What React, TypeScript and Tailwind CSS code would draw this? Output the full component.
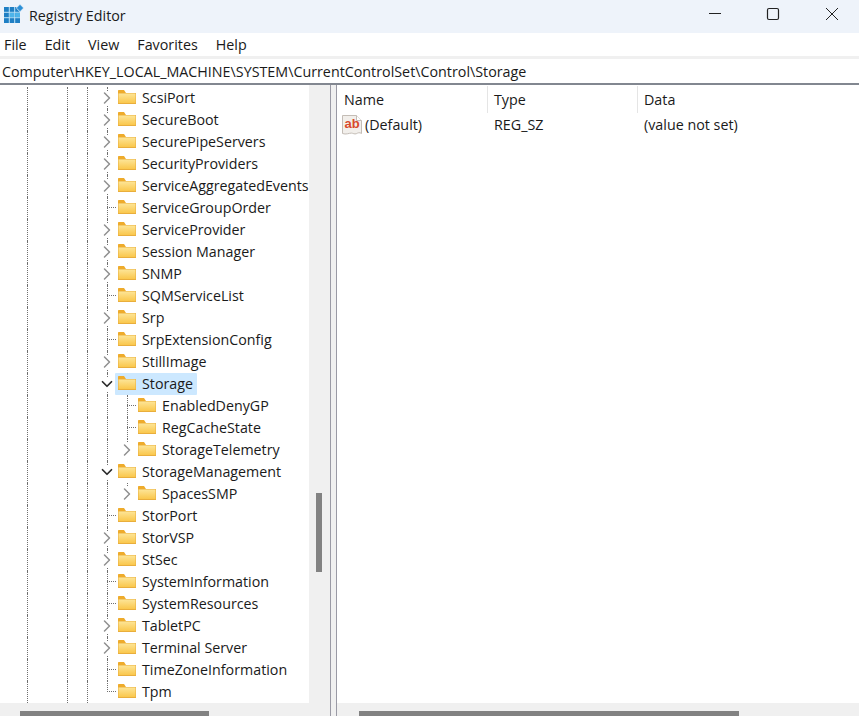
import { ChevronDown, ChevronRight } from "lucide-react";

type Row = { name: string; level?: 0 | 1; arrow?: "open" | "closed"; selected?: boolean; last?: boolean };

const rows: Row[] = [
  { name: "ScsiPort", arrow: "closed" },
  { name: "SecureBoot", arrow: "closed" },
  { name: "SecurePipeServers", arrow: "closed" },
  { name: "SecurityProviders", arrow: "closed" },
  { name: "ServiceAggregatedEvents", arrow: "closed" },
  { name: "ServiceGroupOrder" },
  { name: "ServiceProvider", arrow: "closed" },
  { name: "Session Manager", arrow: "closed" },
  { name: "SNMP", arrow: "closed" },
  { name: "SQMServiceList" },
  { name: "Srp", arrow: "closed" },
  { name: "SrpExtensionConfig" },
  { name: "StillImage", arrow: "closed" },
  { name: "Storage", arrow: "open", selected: true },
  { name: "EnabledDenyGP", level: 1 },
  { name: "RegCacheState", level: 1 },
  { name: "StorageTelemetry", level: 1, arrow: "closed", last: true },
  { name: "StorageManagement", arrow: "open" },
  { name: "SpacesSMP", level: 1, arrow: "closed", last: true },
  { name: "StorPort" },
  { name: "StorVSP", arrow: "closed" },
  { name: "StSec", arrow: "closed" },
  { name: "SystemInformation" },
  { name: "SystemResources" },
  { name: "TabletPC", arrow: "closed" },
  { name: "Terminal Server", arrow: "closed" },
  { name: "TimeZoneInformation" },
  { name: "Tpm", last: true },
];

const Folder = () => (
  <svg width="18" height="14" viewBox="0 0 18 14" className="shrink-0 mt-[3px]">
    <defs>
      <linearGradient id="folderBody" x1="0" y1="0" x2="0" y2="1">
        <stop offset="0" stopColor="#fde597" />
        <stop offset="1" stopColor="#fac74c" />
      </linearGradient>
    </defs>
    <path d="M0 1c0-.6.4-1 1-1h5l2 3H0z" fill="#eeab2b" />
    <path d="M0 3h18v11H0z" fill="#e9ae3c" />
    <rect x="0.500" y="3.500" width="17" height="9.500" fill="url(#folderBody)" />
  </svg>
);

const RegIcon = () => (
  <svg width="20" height="20" viewBox="0 0 20 20" className="shrink-0">
    <path d="M0.500 0.500h14l5 5v13c-2-1.400-3.600-.6-5.200.2-1.700.8-3.300-.6-5-.6-2.400 0-5.300 1.800-8.800.4z" fill="#f2efeb" stroke="#c4bdb6" strokeWidth="1" />
    <path d="M14.500 0.500v5h5" fill="#fff" stroke="#c4bdb6" strokeWidth="1" />
    <text x="2.500" y="13" fontSize="13" fontWeight="700" fill="#d94a2b" fontFamily="Liberation Sans, sans-serif">ab</text>
  </svg>
);

// dotted tree guide, one cell per indent
const Guide = ({ width }: { width: string }) => (
  <div className={`${width} h-full border-l border-dotted border-[#6f6f6f] shrink-0`} />
);

const TreeRow = ({ row }: { row: Row }) => (
  <div className="flex h-[22px] items-stretch shrink-0">
    <div className="w-[27px] shrink-0" />
    <Guide width="w-[40px]" />
    <Guide width="w-[20px]" />
    <Guide width="w-[20px]" />
    {row.level === 1 && <Guide width="w-[20px]" />}
    <div className="relative w-[11px] shrink-0">
      <div className={row.last ? "h-1/2 border-l border-dotted border-[#6f6f6f]" : "h-full border-l border-dotted border-[#6f6f6f]"} />
      {!row.arrow && <div className="absolute left-0 top-[10px] w-[9px] border-t border-dotted border-[#6f6f6f]" />}
      {row.arrow && (
        <div className="absolute left-[-8px] top-[4px] w-[15px] h-[14px] bg-white flex items-center justify-center">
          {row.arrow === "closed" ? (
            <ChevronRight className="w-[20px] h-[20px] shrink-0 text-[#909090]" strokeWidth={1.8} />
          ) : (
            <ChevronDown className="w-[18px] h-[18px] shrink-0 text-[#2b2b2b]" strokeWidth={2.3} />
          )}
        </div>
      )}
    </div>
    {row.selected ? (
      <div className="-ml-[3px] pl-[3px] pr-[4px] flex items-start h-[22px] bg-[#cce8ff] whitespace-nowrap rounded-[1px]">
        <Folder />
        <span className="ml-[6px] text-[14.25px] leading-[22px] text-[#1a1a1a]">{row.name}</span>
      </div>
    ) : (
      <div className="flex items-start whitespace-nowrap">
        <Folder />
        <span className="ml-[6px] text-[14.25px] leading-[22px] text-[#1a1a1a]">{row.name}</span>
      </div>
    )}
  </div>
);

export default function App() {
  return (
    <div className="w-[859px] h-[716px] overflow-hidden flex flex-col bg-white font-['Open_Sans','Noto_Sans',sans-serif] text-[#1a1a1a]">
      {/* Title bar */}
      <div className="h-[33px] bg-[#eef3fa] flex items-center shrink-0">
        <svg width="20" height="20" viewBox="0 0 20 20" className="ml-[4px] mb-[5px] shrink-0">
          <rect x="0" y="3" width="16" height="16" fill="#1f7fc4" />
          <path d="M5.300 3v16M10.700 3v16M0 8.300h16M0 13.700h16" stroke="#bfe3f7" strokeWidth="1" />
          <rect x="5.800" y="8.800" width="4.400" height="4.400" fill="#4db4ea" />
          <rect x="11.200" y="8.800" width="4.800" height="4.400" fill="#4db4ea" />
          <path d="M16 0.300l3.700 3.700L16 7.700 12.300 4z" fill="#2b8fd6" stroke="#eef3fa" strokeWidth="0.800" />
        </svg>
        <span className="ml-[5px] mb-[1px] text-[14.3px] leading-none">Registry Editor</span>
        <div className="ml-auto mb-[5px] flex items-center">
          <svg width="14" height="14" viewBox="0 0 14 14" className="mr-[44px]"><path d="M1 6.500h12" stroke="#222" strokeWidth="1" /></svg>
          <svg width="14" height="14" viewBox="0 0 14 14" className="mr-[45px]"><rect x="1.500" y="1.500" width="11" height="11" rx="1.500" fill="none" stroke="#222" strokeWidth="1.200" /></svg>
          <svg width="14" height="14" viewBox="0 0 14 14" className="mr-[20px]"><path d="M1 1l12 12M13 1L1 13" stroke="#222" strokeWidth="1" /></svg>
        </div>
      </div>
      {/* Menu */}
      <div className="h-[23px] bg-white flex items-center gap-[18px] pl-[4px] pt-[1px] text-[14.3px] shrink-0">
        <span>File</span>
        <span>Edit</span>
        <span>View</span>
        <span>Favorites</span>
        <span>Help</span>
      </div>
      <div className="h-[3px] bg-[#f0f0f0] shrink-0" />
      {/* Address */}
      <div className="h-[24px] bg-white flex items-center pl-[2px] pt-[2px] text-[14.3px] shrink-0">
        Computer\HKEY_LOCAL_MACHINE\SYSTEM\CurrentControlSet\Control\Storage
      </div>
      <div className="h-[2px] bg-[#828790] shrink-0" />
      {/* Panes */}
      <div className="flex-1 flex min-h-0">
        <div className="w-[330px] flex flex-col shrink-0">
          <div className="flex-1 flex min-h-0">
            <div className="w-[309px] overflow-hidden flex flex-col pt-[2px]">
              {rows.map((r) => (
                <TreeRow key={r.name} row={r} />
              ))}
            </div>
            <div className="w-[21px] bg-[#f0f0f0] pl-[7px]">
              <div className="w-[6px] h-[79px] mt-[408px] bg-[#828282]" />
            </div>
          </div>
          <div className="h-[13px] bg-[#f0f0f0] shrink-0 flex items-end">
            <div className="ml-[20px] w-[189px] h-[5px] bg-[#828282]" />
          </div>
        </div>
        {/* Splitter */}
        <div className="w-[7px] bg-[#f0f0f0] border-x border-[#9a9aa5] shrink-0" />
        {/* Values */}
        <div className="flex-1 flex flex-col min-w-0">
          <div className="flex-1 bg-white">
            <div className="flex h-[28px] items-stretch text-[14.3px] pt-[1px]">
              <div className="w-[151px] pl-[7px] flex items-center border-r border-[#e5e5e5]">Name</div>
              <div className="w-[150px] pl-[6px] flex items-center border-r border-[#e5e5e5]">Type</div>
              <div className="pl-[6px] flex items-center">Data</div>
            </div>
            <div className="flex h-[22px] items-center text-[14.3px] pt-[1px]">
              <div className="w-[150px] pl-[5px] flex items-center gap-[3px]">
                <RegIcon />
                <span>(Default)</span>
              </div>
              <div className="w-[150px] pl-[7px]">REG_SZ</div>
              <div className="pl-[7px]">(value not set)</div>
            </div>
          </div>
          <div className="h-[13px] bg-[#f0f0f0] shrink-0 flex items-end">
            <div className="ml-[22px] w-[380px] h-[5px] bg-[#828282]" />
          </div>
        </div>
      </div>
    </div>
  );
}
